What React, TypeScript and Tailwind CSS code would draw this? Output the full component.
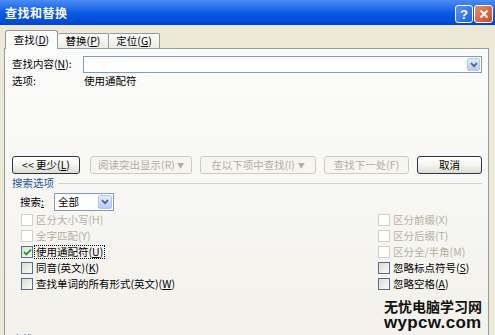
import React from "react";

const U = ({ c }: { c: string }) => (
  <span className="underline underline-offset-[1px] decoration-[1px]">{c}</span>
);

function Chevron() {
  return (
    <svg width="8" height="6" viewBox="0 0 8 6">
      <path d="M1 1.2 L4 4.2 L7 1.2" stroke="#4d6185" strokeWidth="1.7" fill="none" />
    </svg>
  );
}

function DropBtn({ size }: { size: string }) {
  return (
    <div
      className={`${size} rounded-[2px] border border-[#b4c6ee] bg-gradient-to-b from-[#e2ebfe] to-[#b6cbf7] flex items-center justify-center`}
    >
      <Chevron />
    </div>
  );
}

function Btn({
  w,
  disabled,
  children,
}: {
  w: string;
  disabled?: boolean;
  children: React.ReactNode;
}) {
  return (
    <div
      className={`${w} h-[18px] rounded-[3px] flex items-center justify-center text-[10.5px] leading-none border ${
        disabled
          ? "border-[#cdcbbf] bg-[#f6f5f0] text-[#b0ad9f]"
          : "border-[#27384d] bg-gradient-to-b from-[#ffffff] via-[#f5f4ef] to-[#dedbd0] text-black"
      }`}
    >
      {children}
    </div>
  );
}

function Check({
  label,
  disabled,
  checked,
  focus,
}: {
  label: React.ReactNode;
  disabled?: boolean;
  checked?: boolean;
  focus?: boolean;
}) {
  return (
    <div className="h-[16px] flex items-center">
      <div
        className={`w-[12px] h-[12px] border flex items-center justify-center ${
          disabled
            ? "border-[#d2d0c5] bg-white"
            : "border-[#5a6e8c] bg-gradient-to-br from-[#dcdbd4] to-[#fbfbf9]"
        }`}
      >
        {checked && (
          <svg width="9" height="8" viewBox="0 0 9 8">
            <path d="M1 4 L3.4 6.4 L8 1.6" stroke="#21a121" strokeWidth="1.8" fill="none" />
          </svg>
        )}
      </div>
      <div
        className={`ml-[1px] px-[1px] h-[14px] flex items-center text-[10.5px] leading-none ${
          focus ? "border border-dotted border-black" : "border border-transparent"
        } ${disabled ? "text-[#b3b0a2]" : "text-black"}`}
      >
        {label}
      </div>
    </div>
  );
}

export default function App() {
  return (
    <div className="w-[495px] h-[335px] overflow-hidden relative bg-[#ece9d8] font-['Noto_Sans_CJK_SC',sans-serif] text-black">
      {/* Title bar */}
      <div className="h-[25px] flex items-center pl-[5px] pr-[2px] bg-gradient-to-b from-[#4a8cf2] via-[#0a5ae6] to-[#0146cf]">
        <span className="text-white font-bold text-[12px] leading-none tracking-[0.5px]">
          查找和替换
        </span>
        <div className="ml-auto flex gap-[1px] mt-[3px]">
          <div className="w-[18px] h-[18px] rounded-[3px] border border-white bg-gradient-to-br from-[#5a95f5] to-[#1d5fdc] flex items-center justify-center text-white font-bold text-[13px] leading-none font-['Liberation_Sans',sans-serif]">
            ?
          </div>
          <div className="w-[19px] h-[18px] rounded-[3px] border border-white bg-gradient-to-br from-[#ea8a66] to-[#cc4a25] flex items-center justify-center">
            <svg width="10" height="10" viewBox="0 0 10 10">
              <path d="M1.5 1.5 L8.5 8.5 M8.5 1.5 L1.5 8.5" stroke="white" strokeWidth="2" />
            </svg>
          </div>
        </div>
      </div>

      {/* Tabs */}
      <div className="pt-[5px] pl-[5px] flex items-end h-[23px] relative z-10">
        <div className="w-[53px] h-[19px] -mb-px rounded-t-[3px] border border-b-0 border-[#919b9c] bg-[#fcfcfb] flex items-center justify-center text-[10.5px] leading-none">
          查找(<U c="D" />)
        </div>
        <div className="w-[51px] h-[15px] rounded-t-[2px] border border-b-0 border-l-0 border-[#919b9c] bg-gradient-to-b from-[#ffffff] to-[#ecebe5] flex items-center justify-center text-[10.5px] leading-none">
          替换(<U c="P" />)
        </div>
        <div className="w-[51px] h-[15px] rounded-t-[2px] border border-b-0 border-l-0 border-[#919b9c] bg-gradient-to-b from-[#ffffff] to-[#ecebe5] flex items-center justify-center text-[10.5px] leading-none">
          定位(<U c="G" />)
        </div>
      </div>

      {/* Panel */}
      <div className="ml-[4px] w-[485px] h-[300px] border border-[#919b9c] bg-gradient-to-b from-[#fcfcfb] to-[#f2f1eb] pl-[7px] pr-[6px] pt-[7px] text-[10.5px] leading-none">
        {/* Find what */}
        <div className="flex items-center h-[17px]">
          <div className="w-[71px]">
            查找内容(<U c="N" />):
          </div>
          <div className="flex-1 h-[17px] border border-[#7f9db9] bg-white flex items-center justify-end pr-[1px]">
            <DropBtn size="w-[13px] h-[13px]" />
          </div>
        </div>
        <div className="flex items-center h-[14px] mt-[1px]">
          <div className="w-[72px]">选项:</div>
          <div>使用通配符</div>
        </div>

        {/* Buttons */}
        <div className="flex items-center mt-[68px]">
          <Btn w="w-[68px]">
            &lt;&lt; 更少(<U c="L" />)
          </Btn>
          <div className="ml-[10px]">
            <Btn w="w-[102px]" disabled>
              阅读突出显示(R)
              <span className="ml-[2px] text-[7px]">▼</span>
            </Btn>
          </div>
          <div className="ml-[8px]">
            <Btn w="w-[116px]" disabled>
              在以下项中查找(I)
              <span className="ml-[3px] text-[7px]">▼</span>
            </Btn>
          </div>
          <div className="ml-[8px]">
            <Btn w="w-[85px]" disabled>
              查找下一处(F)
            </Btn>
          </div>
          <div className="ml-[8px]">
            <Btn w="w-[65px]">取消</Btn>
          </div>
        </div>

        {/* Search options header */}
        <div className="flex items-center h-[14px] mt-[2px]">
          <span className="text-[#1d4fa6]">搜索选项</span>
          <div className="flex-1 ml-[4px] border-t border-[#d6d4c8]" />
        </div>

        {/* Search select */}
        <div className="flex items-center mt-[3px] pl-[8px]">
          <div className="w-[34px]">
            搜索<U c=":" />
          </div>
          <div className="w-[60px] h-[18px] border border-[#7f9db9] bg-white flex items-center pl-[3px] pr-[1px]">
            <span>全部</span>
            <div className="ml-auto">
              <DropBtn size="w-[14px] h-[14px]" />
            </div>
          </div>
        </div>

        {/* Checkboxes */}
        <div className="mt-[1px] grid grid-cols-[366px_1fr]">
          <div className="pl-[9px] flex flex-col">
            <Check disabled label={<>区分大小写(H)</>} />
            <Check disabled label={<>全字匹配(Y)</>} />
            <Check checked focus label={<>使用通配符(<U c="U" />)</>} />
            <Check label={<>同音(英文)(<U c="K" />)</>} />
            <Check label={<>查找单词的所有形式(英文)(<U c="W" />)</>} />
          </div>
          <div className="flex flex-col">
            <Check disabled label={<>区分前缀(X)</>} />
            <Check disabled label={<>区分后缀(T)</>} />
            <Check disabled label={<>区分全/半角(M)</>} />
            <Check label={<>忽略标点符号(<U c="S" />)</>} />
            <Check label={<>忽略空格(<U c="A" />)</>} />
          </div>
        </div>

        {/* Find header (cut off) */}
        <div className="flex items-center h-[14px] mt-[40px]">
          <span className="text-[#1d4fa6]">查找</span>
          <div className="flex-1 ml-[4px] border-t border-[#d6d4c8]" />
        </div>
      </div>

      {/* Watermark */}
      <div className="absolute left-[384px] top-[299px] flex flex-col gap-[2px]">
        <div className="h-[14px] text-[14px] leading-[14px] font-bold text-[#111]">无忧电脑学习网</div>
        <div className="h-[15px] text-[17px] leading-[15px] font-bold text-[#111] font-['Liberation_Sans',sans-serif] tracking-[0.3px]">
          wypcw.com
        </div>
      </div>
    </div>
  );
}
